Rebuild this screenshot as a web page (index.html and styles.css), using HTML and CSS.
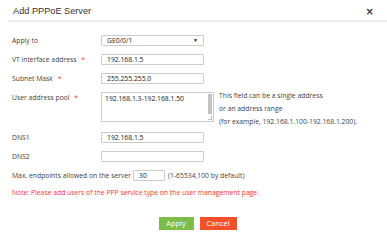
FILE: index.html
```html
<!DOCTYPE html>
<html lang="en">
<head>
   <meta charset="UTF-8">
   <title>Add PPPoE Server</title>
   <link rel="stylesheet" href="styles.css">
</head>
<body>
   <div class="dialog">
      <div class="dialog-head">
         <span class="dialog-title">Add PPPoE Server</span>
         <span class="close">&times;</span>
      </div>
      <div class="form">
         <div class="row">
            <label class="lbl">Apply to</label>
            <div class="select"><span>GE0/0/1</span><span class="caret">&#9660;</span></div>
         </div>
         <div class="row">
            <label class="lbl">VT interface address <i class="req">*</i></label>
            <input class="txt" type="text" value="192.168.1.5">
         </div>
         <div class="row">
            <label class="lbl">Subnet Mask <i class="req">*</i></label>
            <input class="txt" type="text" value="255.255.255.0">
         </div>
         <div class="row row-pool">
            <label class="lbl">User address pool <i class="req">*</i></label>
            <div class="area">
               <span class="area-text">192.168.1.3-192.168.1.50</span>
               <span class="scroll"></span>
               <span class="grip"></span>
            </div>
            <div class="hint">
               <p>This field can be a single address</p>
               <p>or an address range</p>
               <p>(for example, 192.168.1.100-192.168.1.200).</p>
            </div>
         </div>
         <div class="row">
            <label class="lbl">DNS1</label>
            <input class="txt" type="text" value="192.168.1.5">
         </div>
         <div class="row">
            <label class="lbl">DNS2</label>
            <input class="txt" type="text" value="">
         </div>
         <div class="row row-max">
            <label class="lbl-inline">Max. endpoints allowed on the server</label>
            <input class="txt small" type="text" value="30">
            <span class="range">(1-65534,100 by default)</span>
         </div>
         <p class="note">Note: Please add users of the PPP service type on the user management page.</p>
      </div>
      <div class="actions">
         <button class="btn btn-apply">Apply</button>
         <button class="btn btn-cancel">Cancel</button>
      </div>
   </div>
</body>
</html>
```

FILE: styles.css
```css
* { box-sizing: border-box; }
body {
   margin: 0;
   background: #fff;
   font-family: "Open Sans", "Noto Sans", sans-serif;
   color: #444;
}
.dialog {
   width: 387px;
   height: 243px;
}
.dialog-head {
   display: flex;
   justify-content: space-between;
   align-items: center;
   height: 22px;
   margin-left: 8px;
   padding: 2px 13px 0 5px;
   border-bottom: 2px solid #ececec;
}
.dialog-title {
   font-family: "Liberation Sans", Arial, sans-serif;
   font-size: 9.2px;
   color: #333;
}
.close {
   font-family: "DejaVu Sans", sans-serif;
   font-size: 10px;
   font-weight: bold;
   color: #333;
}
.form {
   padding: 13px 0 0 12px;
   font-size: 6.8px;
}
.row {
   display: flex;
   align-items: flex-start;
   margin-bottom: 8px;
}
.lbl {
   width: 89px;
   flex: none;
   line-height: 11px;
}
.req {
   font-style: normal;
   color: #f33;
   margin-left: 3px;
}
.select, .txt {
   width: 103px;
   height: 11px;
   border: 1px solid #ccc;
   border-radius: 1px;
   background: #fff;
   font: inherit;
   color: #222;
   padding: 0 5px;
   line-height: 9px;
}
.select {
   display: flex;
   justify-content: space-between;
   align-items: center;
}
.caret { font-size: 5px; color: #222; }
.row-pool {
   height: 30px;
   margin-bottom: 10px;
}
.area {
   position: relative;
   width: 113px;
   height: 30px;
   border: 1px solid #ccc;
   flex: none;
}
.area-text {
   display: block;
   padding: 1px 3px;
   color: #222;
   line-height: 9px;
}
.scroll {
   position: absolute;
   right: 1px;
   top: 1px;
   width: 4px;
   height: 20px;
   background: #c4c4c4;
}
.grip {
   position: absolute;
   right: 1px;
   bottom: 1px;
   width: 4px;
   height: 4px;
   border-right: 1px solid #bbb;
   border-bottom: 1px solid #bbb;
}
.hint {
   margin-left: 5px;
   margin-top: -3px;
   line-height: 13px;
}
.hint p { margin: 0; }
.row-max {
   align-items: center;
   margin-bottom: 6px;
}
.lbl-inline { margin-right: 2px; }
.txt.small {
   width: 32px;
   height: 11px;
}
.range { margin-left: 3px; }
.note {
   margin: 0;
   color: #f33;
   line-height: 11px;
}
.actions {
   display: flex;
   justify-content: center;
   gap: 6px;
   margin-top: 19px;
   padding-left: 8px;
}
.btn {
   height: 13px;
   padding: 0;
   border: none;
   color: #fff;
   font-family: "Open Sans", sans-serif;
   font-size: 7.5px;
   line-height: 13px;
}
.btn-apply { width: 35px; background: #7cbd4a; }
.btn-cancel { width: 37px; background: #f2502b; }
```
